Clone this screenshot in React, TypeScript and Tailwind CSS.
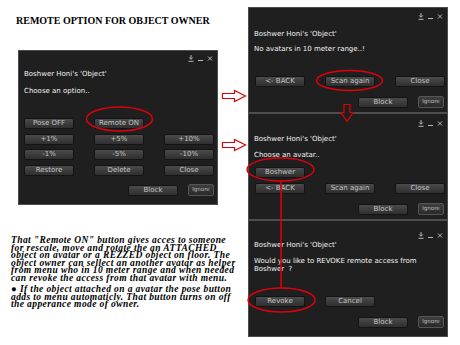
import type { ReactNode } from 'react';

function TitleIcons() {
  return (
    <div className="flex items-center gap-[4px] text-[#b8b8b8]">
      <svg width="6" height="7" viewBox="0 0 6 7" fill="none" stroke="currentColor" strokeWidth="1">
        <path d="M3 0v4M1.2 2.4L3 4.3 4.8 2.4M0.5 6.3h5" />
      </svg>
      <svg width="5" height="7" viewBox="0 0 5 7" fill="none" stroke="currentColor" strokeWidth="1">
        <path d="M0 5.5h5" />
      </svg>
      <svg width="6" height="7" viewBox="0 0 6 7" fill="none" stroke="currentColor" strokeWidth="1">
        <path d="M1 1.5l4 4M5 1.5l-4 4" />
      </svg>
    </div>
  );
}

function Btn({ label, className = '' }: { label: string; className?: string }) {
  return (
    <div
      className={`w-[50px] h-[11px] rounded-[2px] border border-[#141414] bg-linear-to-b from-[#4b4b4b] to-[#2f2f2f] text-[#c4c4c4] text-[7px] leading-none flex items-center justify-center ${className}`}
    >
      {label}
    </div>
  );
}

function BlockRow({ left }: { left: string }) {
  return (
    <div className={`flex items-center ${left}`}>
      <Btn label="Block" />
      <div className="ml-[10px] w-[26px] h-[12px] rounded-[2px] border border-[#555] bg-linear-to-b from-[#3e3e3e] to-[#2a2a2a] text-[#bdbdbd] text-[5.5px] leading-none flex items-center justify-center">
        Ignore
      </div>
    </div>
  );
}

function Panel({ h, bar, children }: { h: string; bar: string; children: ReactNode }) {
  return (
    <div className={`w-[200px] ${h} bg-[#1f1f1f] border border-[#4e4e4e] flex flex-col shrink-0 font-['DejaVu_Sans',sans-serif] text-[7px] text-[#f2f2f2]`}>
      <div className={`flex justify-end pr-[4px] ${bar}`}>
        <TitleIcons />
      </div>
      {children}
    </div>
  );
}

function Line({ children, className = '' }: { children: ReactNode; className?: string }) {
  return <div className={`pl-[5px] leading-[10px] whitespace-nowrap ${className}`}>{children}</div>;
}

const para1 = `That "Remote ON" button gives acces to someone
for rescale, move and rotate the an ATTACHED
object on avatar or a REZZED object on floor. The
object owner can sellect an another avatar as helper
from menu who in 10 meter range and when needed
can revoke the access from that avatar with menu.`;

const para2 = `● If the object attached on a avatar the pose button
adds to menu automaticly. That button turns on off
the apperance mode of owner.`;

export default function App() {
  return (
    <div className="w-[460px] h-[345px] bg-white relative overflow-hidden flex">
      {/* Left column */}
      <div className="w-[248px] shrink-0 flex flex-col">
        <h1 className="ml-[16px] mt-[15px] text-[10px] leading-[12px] font-bold text-black font-['Liberation_Serif',serif] whitespace-nowrap">
          REMOTE OPTION FOR OBJECT OWNER
        </h1>

        <div className="ml-[18px] mt-[23px]">
          <Panel h="h-[155px]" bar="h-[14px] items-center">
            <Line className="mt-[4px]">Boshwer Honi's 'Object'</Line>
            <Line className="mt-[7px]">Choose an option..</Line>
            <div className="mt-[22px] pl-[5px] grid grid-cols-[50px_50px_50px] gap-x-[20px] gap-y-[4.5px]">
              <Btn label="Pose OFF" />
              <Btn label="Remote ON" />
              <div />
              <Btn label="+1%" />
              <Btn label="+5%" />
              <Btn label="+10%" />
              <Btn label="-1%" />
              <Btn label="-5%" />
              <Btn label="-10%" />
              <Btn label="Restore" />
              <Btn label="Delete" />
              <Btn label="Close" />
            </div>
            <BlockRow left="mt-[8.5px] ml-[109px]" />
          </Panel>
        </div>

        <div className="ml-[11px] mt-[32px] font-['Liberation_Serif',serif] italic font-bold text-[9.5px] leading-[7.6px] tracking-[0.4px] text-black whitespace-pre-line">
          <p>{para1}</p>
          <p className="mt-[3.5px]">{para2}</p>
        </div>
      </div>

      {/* Right column */}
      <div className="flex flex-col pt-[7px]">
        <Panel h="h-[106px]" bar="h-[16px] items-center">
          <Line className="mt-[5px]">Boshwer Honi's 'Object'</Line>
          <Line className="mt-[5px]">No avatars in 10 meter range..!</Line>
          <div className="mt-[22px] pl-[6px] flex gap-x-[20px]">
            <Btn label="<- BACK" />
            <Btn label="Scan again" />
            <Btn label="Close" />
          </div>
          <BlockRow left="mt-[9px] ml-[109px]" />
        </Panel>

        <Panel h="h-[107px]" bar="h-[18px] items-center">
          <Line className="mt-[2px]">Boshwer Honi's 'Object'</Line>
          <Line className="mt-[6px]">Choose an avatar..</Line>
          <div className="mt-[7px] pl-[6px]">
            <Btn label="Boshwer" />
          </div>
          <div className="mt-[5px] pl-[6px] flex gap-x-[20px]">
            <Btn label="<- BACK" />
            <Btn label="Scan again" />
            <Btn label="Close" />
          </div>
          <BlockRow left="mt-[9px] ml-[109px]" />
        </Panel>

        <Panel h="h-[117px]" bar="h-[19px] items-end pb-[1px]">
          <Line>Boshwer Honi's 'Object'</Line>
          <div className="mt-[7px] pl-[5px] leading-[8px] whitespace-pre-line">
            {'Would you like to REVOKE remote access from\nBoshwer\u00a0\u00a0?'}
          </div>
          <div className="mt-[23px] pl-[6px] flex gap-x-[20px]">
            <Btn label="Revoke" />
            <Btn label="Cancel" />
          </div>
          <BlockRow left="mt-[9px] ml-[109px]" />
        </Panel>
      </div>

      {/* Red annotations */}
      <svg className="absolute inset-0 pointer-events-none" width="460" height="345" viewBox="0 0 460 345" fill="none">
        <g stroke="#e0000b" strokeWidth="1.5">
          <ellipse cx="119.5" cy="119" rx="33" ry="12" />
          <ellipse cx="349.5" cy="80.5" rx="33" ry="10" />
          <ellipse cx="280.5" cy="169.5" rx="33.5" ry="11.5" />
          <ellipse cx="281.5" cy="300" rx="33.5" ry="12" />
          <path d="M281 181V288" />
        </g>
        <g stroke="#e0000b" strokeWidth="1.2" fill="white" strokeLinejoin="miter">
          <path d="M222.5 93.5h12v-3l11 5.5-11 5.5v-3h-12z" />
          <path d="M222.5 142.5h12v-3l11 5.5-11 5.5v-3h-12z" />
        </g>
        <path d="M344 104.5v8h-3l6 9 6-9h-3v-8z" stroke="#e0000b" strokeWidth="1.2" fill="#1f1f1f" />
      </svg>
    </div>
  );
}
